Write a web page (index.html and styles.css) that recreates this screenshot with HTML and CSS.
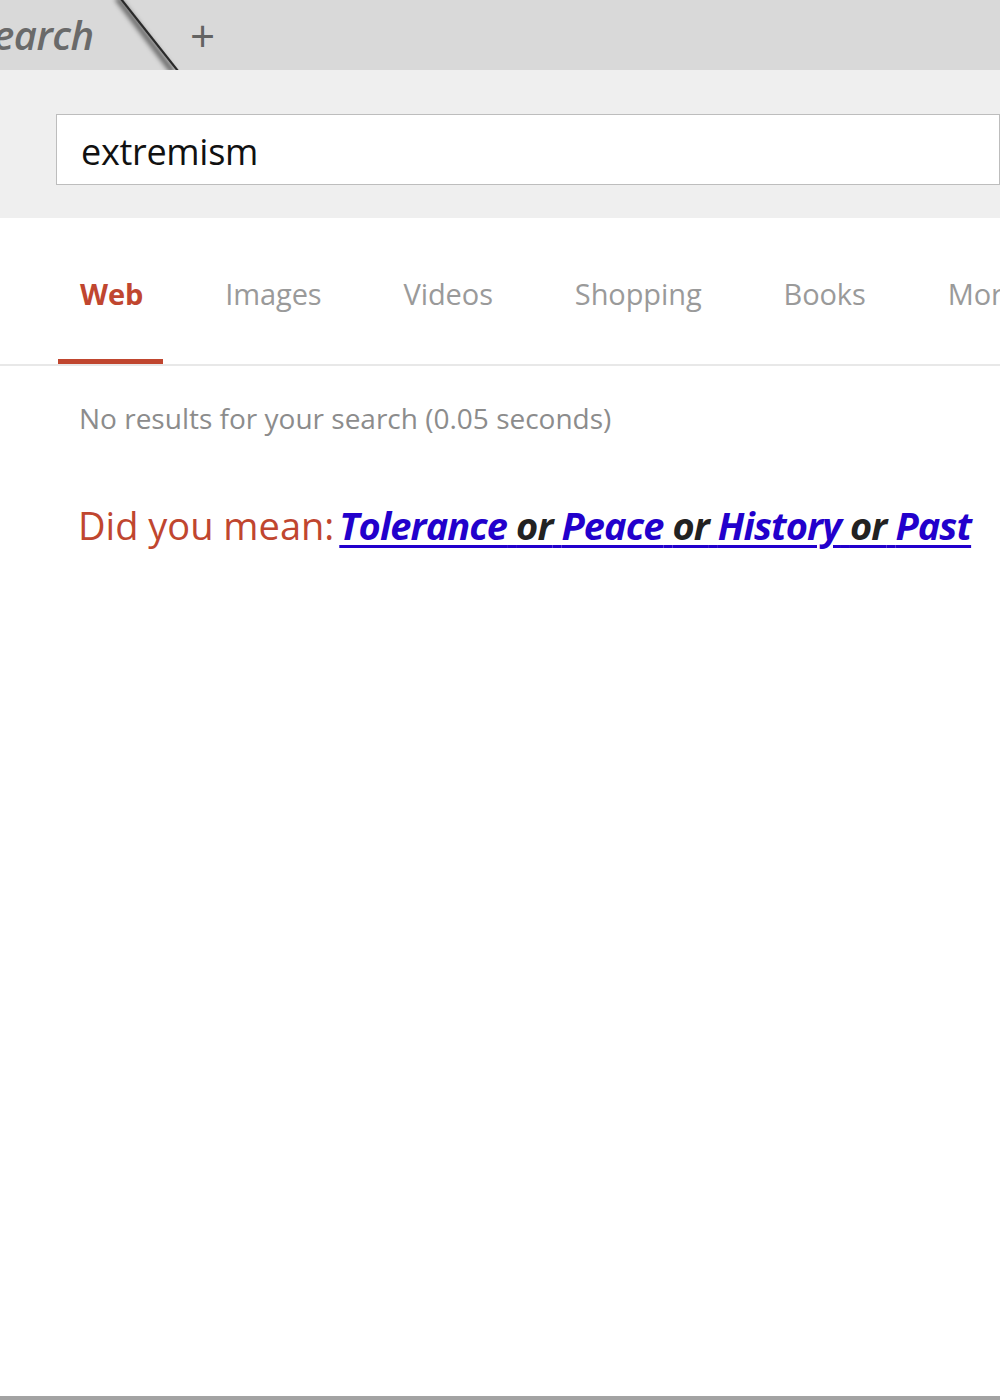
FILE: index.html
```html
<!DOCTYPE html>
<html lang="en">
<head>
<meta charset="utf-8">
<title>Search</title>
<link rel="stylesheet" href="styles.css">
</head>
<body>
<div class="page">
  <header class="tabbar">
    <div class="tab">
      <span class="tab-label">Search</span>
      <svg class="tab-edge" width="90" height="70" viewBox="0 0 90 70" aria-hidden="true">
        <defs>
          <filter id="blur" x="-50%" y="-50%" width="200%" height="200%">
            <feGaussianBlur stdDeviation="2.5"/>
          </filter>
        </defs>
        <line x1="17" y1="-2" x2="73" y2="72" stroke="#000" stroke-opacity="0.6" stroke-width="5" filter="url(#blur)"/>
        <line x1="21" y1="-1" x2="78" y2="71" stroke="#2a2a2a" stroke-width="2.2"/>
      </svg>
    </div>
    <span class="new-tab">+</span>
  </header>

  <section class="searchbar">
    <div class="search-input">extremism</div>
  </section>

  <nav class="verticals">
    <a class="vertical active">Web</a>
    <a class="vertical">Images</a>
    <a class="vertical">Videos</a>
    <a class="vertical">Shopping</a>
    <a class="vertical">Books</a>
    <a class="vertical">More</a>
  </nav>

  <main class="results">
    <p class="stats">No results for your search (0.05 seconds)</p>
    <p class="suggest">
      <span class="dym">Did you mean:</span><span class="alts"><a class="alt">Tolerance</a> <span class="or">or</span> <a class="alt">Peace</a> <span class="or">or</span> <a class="alt">History</a> <span class="or">or</span> <a class="alt">Past</a></span>
    </p>
  </main>

  <footer class="bottom-line"></footer>
</div>
</body>
</html>
```

FILE: styles.css
```css
* { box-sizing: border-box; }

html, body {
  margin: 0;
  padding: 0;
  background: #ffffff;
}

body {
  font-family: "Open Sans", "Noto Sans", "Liberation Sans", sans-serif;
  overflow: hidden;
}

.page {
  width: 1000px;
  height: 1400px;
  display: flex;
  flex-direction: column;
  overflow: hidden;
}

/* ---------- browser tab bar ---------- */
.tabbar {
  height: 70px;
  flex: 0 0 70px;
  background: #d9d9d9;
  display: flex;
  align-items: flex-start;
  overflow: hidden;
}

.tab {
  position: relative;
  width: 190px;
  height: 70px;
  flex: 0 0 190px;
}

.tab-label {
  display: block;
  margin-left: -27px;
  padding-top: 10px;
  font-size: 40px;
  line-height: 50px;
  font-style: italic;
  font-weight: 600;
  color: #6a6a6a;
  letter-spacing: -0.5px;
  white-space: nowrap;
}

.tab-edge {
  position: absolute;
  left: 100px;
  top: 0;
}

.new-tab {
  padding-top: 10px;
  font-size: 44px;
  line-height: 50px;
  font-weight: 400;
  color: #636363;
}

/* ---------- search field ---------- */
.searchbar {
  flex: 0 0 148px;
  background: #efefef;
  padding: 44px 0 0 56px;
}

.search-input {
  height: 71px;
  background: #ffffff;
  border: 1px solid #bdbdbd;
  padding-left: 24px;
  font-size: 36px;
  line-height: 73px;
  color: #111111;
  letter-spacing: -0.3px;
}

/* ---------- verticals ---------- */
.verticals {
  flex: 0 0 148px;
  display: flex;
  align-items: flex-end;
  gap: 42px;
  padding-left: 58px;
  border-bottom: 2px solid #e8e8e8;
  white-space: nowrap;
}

.vertical {
  display: block;
  padding: 0 20px 45px;
  border-bottom: 5px solid transparent;
  font-size: 29px;
  line-height: 40px;
  color: #9a9a9a;
  letter-spacing: -0.1px;
}

.vertical.active {
  color: #c0462f;
  font-weight: 700;
  border-bottom-color: #c0462f;
  padding-left: 22px;
  padding-right: 20px;
}

/* ---------- results ---------- */
.results {
  flex: 1 1 auto;
  padding-left: 79px;
}

.stats {
  margin: 32px 0 0;
  font-size: 28px;
  line-height: 40px;
  color: #8c8c8c;
  letter-spacing: 0;
}

.suggest {
  margin: 62px 0 0 -1px;
  font-size: 38px;
  line-height: 50px;
  white-space: nowrap;
}

.dym {
  color: #c0462f;
}

.alts {
  margin-left: 5px;
  font-style: italic;
  font-weight: 700;
  color: #2200cc;
  letter-spacing: -0.9px;
  text-decoration: underline;
  text-decoration-color: #2200cc;
  text-decoration-thickness: 3px;
  text-underline-offset: 5px;
}

.alt {
  color: #2200cc;
}

.or {
  color: #222222;
}

.bottom-line {
  flex: 0 0 4px;
  background: #a3a3a3;
}
```
